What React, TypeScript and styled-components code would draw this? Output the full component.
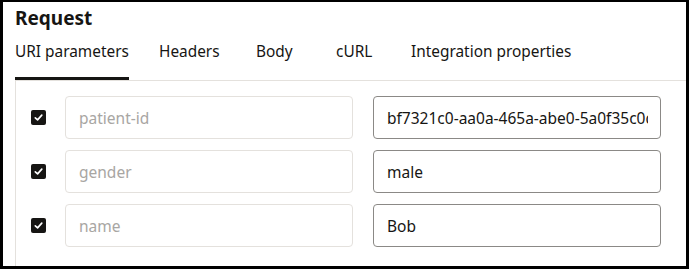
import React from "react";
import styled, { createGlobalStyle } from "styled-components";

const GlobalStyle = createGlobalStyle`
  html, body {
    margin: 0;
    padding: 0;
    background: #fff;
  }
  body {
    font-family: "Noto Sans", "Liberation Sans", sans-serif;
    color: #161513;
  }
`;

const Frame = styled.div`
  box-sizing: border-box;
  width: 689px;
  height: 269px;
  border: 3px solid #000;
  border-top-width: 2px;
  padding-left: 12px;
  display: flex;
  flex-direction: column;
  overflow: hidden;
`;

const Title = styled.h2`
  margin: 0;
  padding-top: 4px;
  font-size: 19px;
  line-height: 24px;
  font-weight: 700;
  color: #161513;
`;

const TabBar = styled.div`
  display: flex;
  align-items: flex-end;
  height: 50px;
  border-bottom: 1px solid #e4e1dd;
`;

const Tab = styled.div<{ $active?: boolean; $w?: number }>`
  box-sizing: border-box;
  width: ${(p) => (p.$w ? `${p.$w}px` : "auto")};
  height: 50px;
  display: flex;
  align-items: flex-start;
  padding-top: 11px;
  font-size: 15.4px;
  line-height: 22px;
  color: #161513;
  span {
    display: inline-block;
    height: 39px;
    box-sizing: border-box;
    border-bottom: 3px solid ${(p) => (p.$active ? "#161513" : "transparent")};
  }
`;

const Panel = styled.div`
  flex: 1;
  border-left: 1px solid #e4e1dd;
  padding: 15px 0 0 15px;
  display: flex;
  flex-direction: column;
  gap: 11px;
`;

const Row = styled.div`
  display: flex;
  align-items: center;
`;

const Check = styled.span`
  box-sizing: border-box;
  width: 15px;
  height: 15px;
  border-radius: 2px;
  background: #161513;
  display: flex;
  align-items: center;
  justify-content: center;
  margin-right: 19px;
  flex-shrink: 0;
`;

const Field = styled.input<{ $muted?: boolean }>`
  box-sizing: border-box;
  width: 288px;
  height: 43px;
  margin-right: 20px;
  padding: 0 12px 0 13px;
  border: 1px solid ${(p) => (p.$muted ? "#e4e1dd" : "#8b8986")};
  border-radius: 4px;
  background: #fff;
  font-family: "Noto Sans", "Liberation Sans", sans-serif;
  font-size: 15.5px;
  color: #161513;
  outline: none;
  &::placeholder {
    color: #a8a6a3;
  }
`;

const params = [
  { name: "patient-id", value: "bf7321c0-aa0a-465a-abe0-5a0f35c0d2e1" },
  { name: "gender", value: "male" },
  { name: "name", value: "Bob" },
];

const tabs = [
  { label: "URI parameters", w: 144 },
  { label: "Headers", w: 97 },
  { label: "Body", w: 80 },
  { label: "cURL", w: 75 },
  { label: "Integration properties" },
];

export default function App() {
  return (
    <>
      <GlobalStyle />
      <Frame>
        <Title>Request</Title>
        <TabBar>
          {tabs.map((t, i) => (
            <Tab key={t.label} $active={i === 0} $w={t.w}>
              <span>{t.label}</span>
            </Tab>
          ))}
        </TabBar>
        <Panel>
          {params.map((p) => (
            <Row key={p.name}>
              <Check>
                <svg width="11" height="11" viewBox="0 0 12 12">
                  <path
                    d="M2.5 6.3 L5 8.6 L9.6 3.4"
                    fill="none"
                    stroke="#fff"
                    strokeWidth="1.8"
                    strokeLinecap="round"
                    strokeLinejoin="round"
                  />
                </svg>
              </Check>
              <Field $muted placeholder={p.name} readOnly />
              <Field value={p.value} readOnly />
            </Row>
          ))}
        </Panel>
      </Frame>
    </>
  );
}
